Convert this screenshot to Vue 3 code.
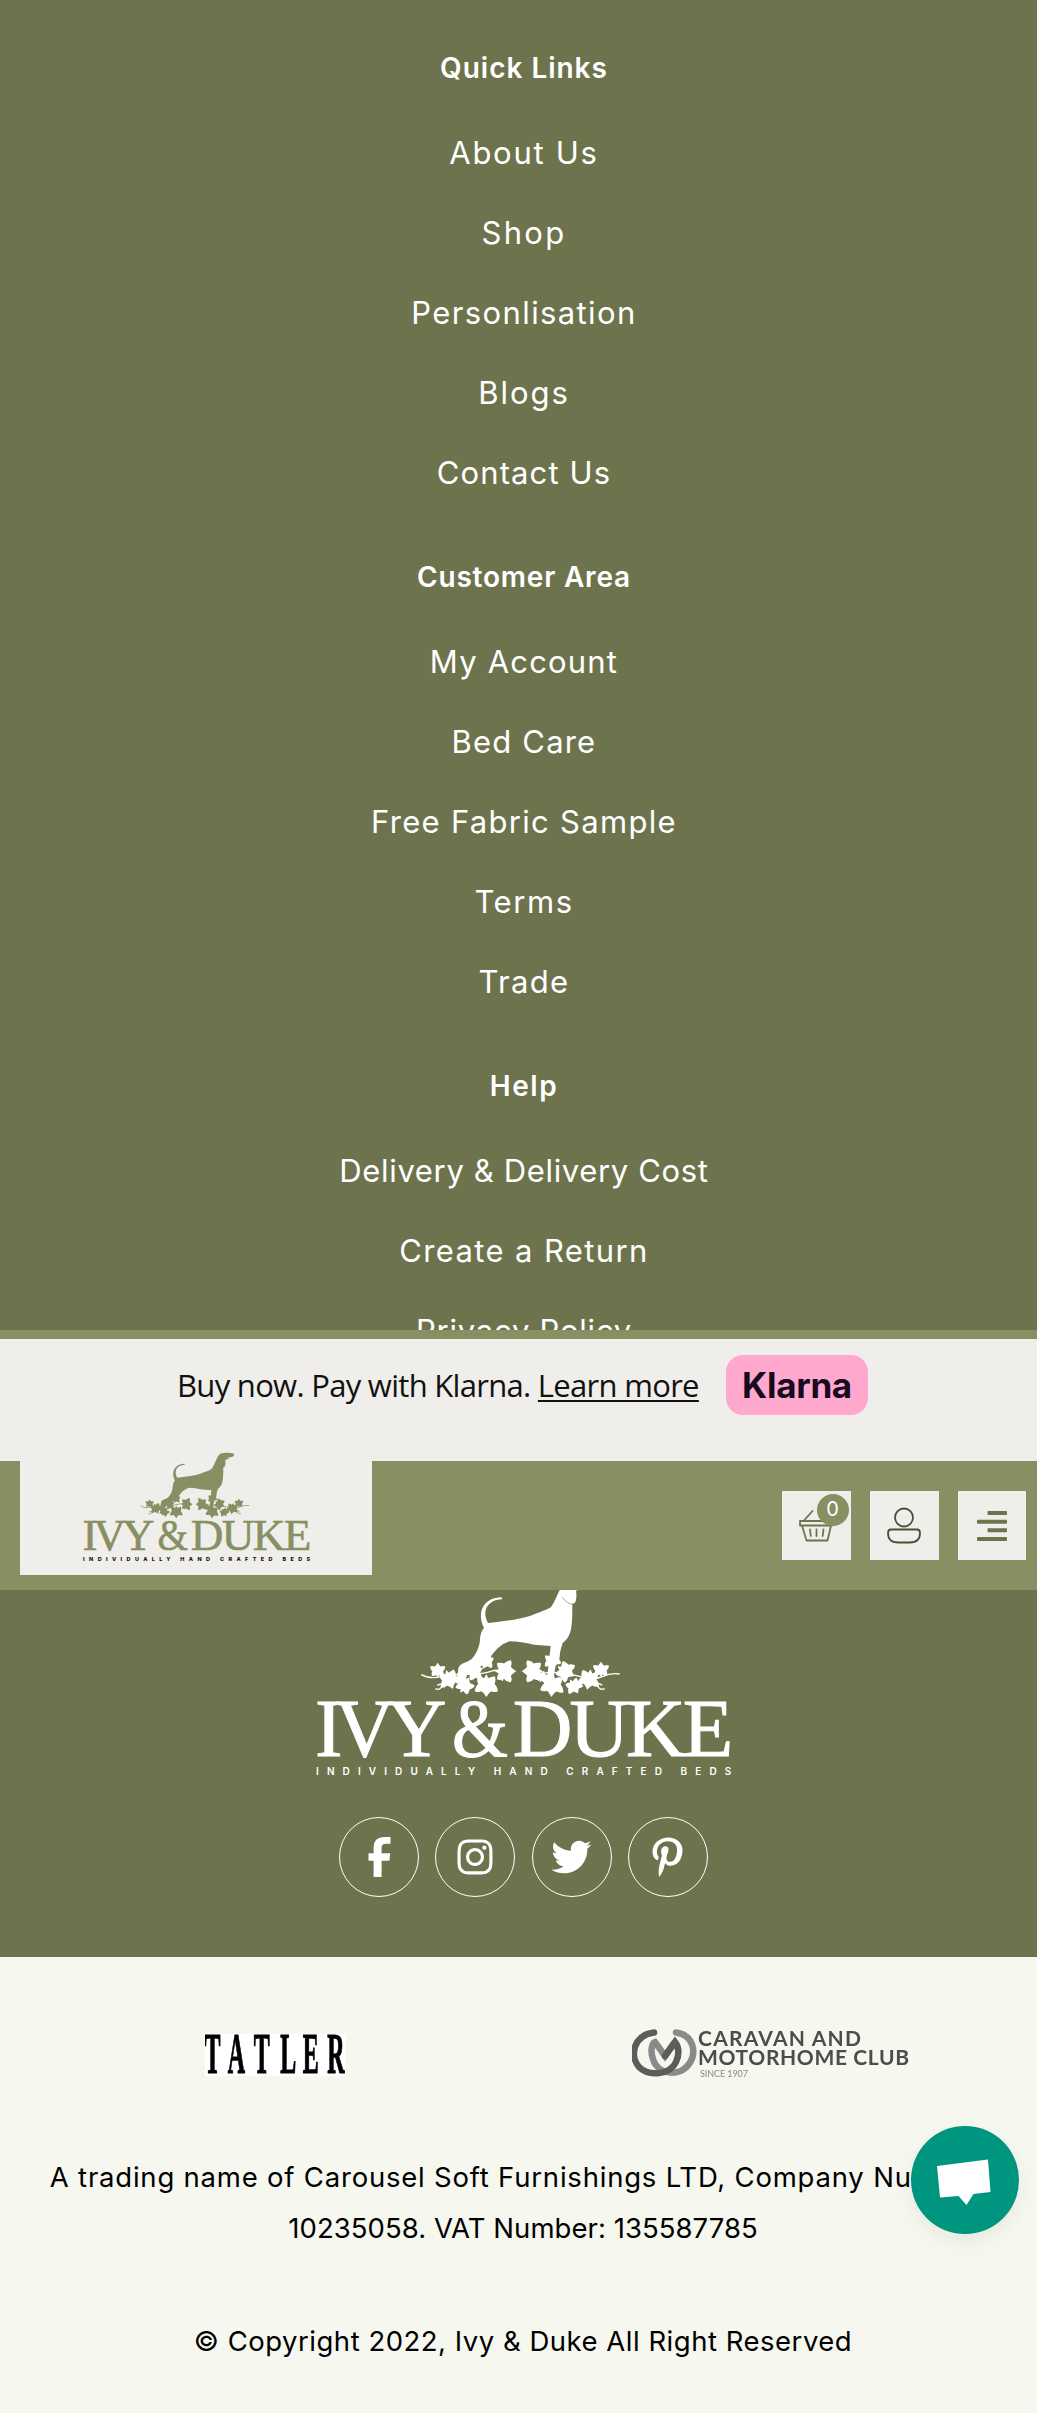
<script setup>
// [label, letter-spacing in px]
const sections = [
  {
    title: ['Quick Links', 0.98],
    links: [['About Us', 1.72], ['Shop', 2.35], ['Personlisation', 1.39], ['Blogs', 1.95], ['Contact Us', 1.13]]
  },
  {
    title: ['Customer Area', 0.79],
    links: [['My Account', 1.18], ['Bed Care', 1.18], ['Free Fabric Sample', 1.3], ['Terms', 1.56], ['Trade', 1.3]]
  },
  {
    title: ['Help', 1.6],
    links: [['Delivery & Delivery Cost', 0.65], ['Create a Return', 1.38], ['Privacy Policy', 0.77]]
  }
]

const leaves = [
  [411, 273, 23, 0], [446, 300, 31, 160], [492, 318, 27, 30], [521, 276, 28, 70], [556, 246, 24, 200],
  [557, 318, 35, 180], [614, 276, 33, 90], [696, 276, 33, -90], [724, 292, 19, 20], [755, 244, 25, 170],
  [755, 318, 35, 185], [795, 276, 30, 120], [820, 321, 25, 150], [865, 300, 32, 190], [901, 271, 24, 0]
]

const socials = [
  { name: 'Facebook', box: '-1 0 40 40', d: 'M30.500 0v6.800h-4.600q-4.300 0-4.300 4v5.400h8.600l-.8 7.500h-7.800V40h-8V23.700H8.500v-7.500h5.100V10.500Q13.600.2 24 0z' },
  { name: 'Instagram', box: '-32 0 512 512', d: 'M224.100 141c-63.600 0-114.900 51.300-114.900 114.900s51.300 114.900 114.900 114.900S339 319.500 339 255.900 287.700 141 224.100 141zm0 189.600c-41.100 0-74.700-33.500-74.700-74.700s33.500-74.700 74.700-74.700 74.700 33.500 74.700 74.700-33.600 74.700-74.700 74.700zm146.400-194.300c0 14.900-12 26.800-26.800 26.800-14.900 0-26.800-12-26.800-26.800s12-26.800 26.800-26.800 26.800 12 26.800 26.800zm76.100 27.200c-1.700-35.900-9.900-67.700-36.200-93.900-26.200-26.200-58-34.400-93.900-36.200-37-2.100-147.900-2.100-184.900 0-35.800 1.700-67.600 9.900-93.900 36.100s-34.400 58-36.200 93.900c-2.100 37-2.100 147.900 0 184.900 1.700 35.900 9.900 67.700 36.200 93.900s58 34.400 93.900 36.200c37 2.100 147.900 2.100 184.900 0 35.900-1.700 67.700-9.900 93.900-36.200 26.200-26.200 34.400-58 36.200-93.900 2.100-37 2.100-147.800 0-184.800zM398.800 388c-7.800 19.600-22.900 34.700-42.600 42.600-29.500 11.700-99.500 9-132.100 9s-102.700 2.600-132.100-9c-19.600-7.800-34.700-22.900-42.600-42.600-11.700-29.500-9-99.500-9-132.100s-2.600-102.700 9-132.100c7.800-19.600 22.900-34.700 42.600-42.600 29.500-11.700 99.500-9 132.100-9s102.700-2.600 132.100 9c19.600 7.800 34.700 22.900 42.600 42.600 11.700 29.500 9 99.500 9 132.100s2.700 102.700-9 132.100z' },
  { name: 'Twitter', box: '8 0 512 512', d: 'M459.370 151.716c.325 4.548.325 9.097.325 13.645 0 138.720-105.583 298.558-298.558 298.558-59.452 0-114.680-17.219-161.137-47.106 8.447.974 16.568 1.299 25.340 1.299 49.055 0 94.213-16.568 130.274-44.832-46.132-.975-84.792-31.188-98.112-72.772 6.498.974 12.995 1.624 19.818 1.624 9.421 0 18.843-1.300 27.614-3.573-48.081-9.747-84.143-51.980-84.143-102.985v-1.299c13.969 7.797 30.214 12.670 47.431 13.319-28.264-18.843-46.781-51.005-46.781-87.391 0-19.492 5.197-37.360 14.294-52.954 51.655 63.675 129.300 105.258 216.365 109.807-1.624-7.797-2.599-15.918-2.599-24.040 0-57.828 46.782-104.934 104.934-104.934 30.213 0 57.502 12.670 76.670 33.137 23.715-4.548 46.456-13.320 66.599-25.340-7.798 24.366-24.366 44.833-46.132 57.827 21.117-2.273 41.584-8.122 60.426-16.243-14.292 20.791-32.161 39.308-52.628 54.253z' },
  { name: 'Pinterest', box: '-58 0 512 512', d: 'M204 6.500C101.400 6.500 0 74.900 0 185.600 0 256 39.600 296 63.600 296c9.900 0 15.600-27.600 15.600-35.400 0-9.300-23.700-29.100-23.700-67.800 0-80.400 61.200-137.400 140.400-137.400 68.100 0 118.500 38.700 118.500 109.800 0 53.100-21.300 152.700-90.300 152.700-24.900 0-46.200-18-46.200-43.800 0-37.800 26.400-74.400 26.400-113.400 0-66.200-93.900-54.200-93.900 25.800 0 16.800 2.100 35.400 9.600 50.700-13.800 59.400-42 147.900-42 209.100 0 18.900 2.700 37.500 4.500 56.400 3.400 3.800 1.700 3.400 6.900 1.500 50.400-69 48.600-82.500 71.400-172.800 12.300 23.400 44.100 36 69.300 36 106.200 0 153.900-103.500 153.900-196.800C384 71.300 298.200 6.500 204 6.500z' }
]
</script>

<template>
  <div class="page">
    <svg class="defs" width="0" height="0" aria-hidden="true">
      <symbol id="leaf" viewBox="-10 -10 20 20" overflow="visible">
        <path d="M0-10C2-7 3-5.500 4.500-5C6-6 8-6 10-5C9.500-2 8.500 0 7 1C8 3 8 5 7.500 7.500C5 7.500 3.500 7 2 6L0 9.500L-2 6C-3.500 7-5 7.500-7.500 7.500C-8 5-8 3-7 1C-8.500 0-9.500-2-10-5C-8-6-6-6-4.500-5C-3-5.500-2-7 0-10Z" />
      </symbol>
      <symbol id="emblem" viewBox="40 -10 1260 610">
        <path d="M873-2 Q878 10 866 16 L838 22 Q826 28 820 40 Q814 62 815 82 C815 110 815 130 811 150 C806 172 798 182 786 191 L779 215 L776 240 L764 262 L757 310 L737 310 L743 262 L750 200 L700 196 C675 191 650 186 626 186 C598 196 578 216 563 246 L530 268 L500 285 L492 312 L466 312 L474 264 C482 250 500 250 512 240 C526 226 538 200 538 178 C540 160 545 152 550 145 C530 110 540 58 598 54 Q608 55 603 60 C560 62 542 96 562 131 C600 126 650 122 690 109 C715 98 740 92 752 82 C764 66 770 44 780 26 C786 6 798-5 818-5 C836-8 856-3 873-2Z" />
        <path d="M812 22H850Q838 32 826 34Q830 58 822 72Q810 76 800 62Z" />
        <path class="collar" d="M785 54Q800 74 816 75" />
        <path class="vine" d="M362 286Q385 300 420 292T500 285T575 275T605 305M404 328Q418 334 422 322T410 318M957 284Q930 280 905 292T830 290T740 280T715 305M912 328Q896 334 892 320T905 318" />
        <use v-for="(l, i) in leaves" :key="i" href="#leaf" :x="-l[2]" :y="-l[2]" :width="l[2] * 2" :height="l[2] * 2" :transform="`translate(${l[0]} ${l[1]}) rotate(${l[3]})`" />
      </symbol>
    </svg>

    <footer class="footer">
      <section v-for="s in sections" :key="s.title[0]" class="group">
        <h4 :style="{ letterSpacing: s.title[1] + 'px' }">{{ s.title[0] }}</h4>
        <ul>
          <li v-for="l in s.links" :key="l[0]"><a :style="{ letterSpacing: l[1] + 'px' }">{{ l[0] }}</a></li>
        </ul>
      </section>
      <svg class="brand" viewBox="40 -10 1260 610">
        <use href="#emblem" x="40" y="-10" width="1260" height="610" />
        <g class="name">
          <text x="43" y="530" textLength="394">IVY</text>
          <text x="454" y="530" textLength="168" lengthAdjust="spacingAndGlyphs">&amp;</text>
          <text x="636" y="530" textLength="662">DUKE</text>
        </g>
        <text class="tagline" x="46" y="586" textLength="1246">INDIVIDUALLY HAND CRAFTED BEDS</text>
      </svg>
      <div class="socials">
        <a v-for="s in socials" :key="s.name" :aria-label="s.name"><svg :viewBox="s.box"><path :d="s.d" /></svg></a>
      </div>
    </footer>

    <section class="legal">
      <div class="partners">
        <svg class="tatler" width="141" height="42" viewBox="0 0 141 42">
          <rect width="141" height="42" fill="#fff" />
          <g transform="scale(.42 1)">
            <text y="39" x="-1 54 116 179 233 291">TATLER</text>
          </g>
        </svg>
        <svg class="caravan" width="280" height="52" viewBox="0 0 280 52">
          <g fill="none" stroke-width="6.500" stroke-linecap="round">
            <path stroke="#8a8a88" d="M44 4.500C62 7 65 25 57 36C47 50 25 46 21 31C18 23 20 15 23 14L33 28L42 15" />
            <path stroke="#5c5c5a" d="M22 4.500C2 7-3 27 7 39C17 49 38 47 44 34C48 25 46 18 43 14L33 28" />
          </g>
          <text class="club" x="66" y="18" textLength="163">CARAVAN AND</text>
          <text class="club" x="66" y="37" textLength="211">MOTORHOME CLUB</text>
          <text class="since" x="68" y="48.500" textLength="48">SINCE 1907</text>
        </svg>
      </div>
      <p class="company">A trading name of Carousel Soft Furnishings LTD, Company Number</p>
      <p class="vat">10235058. VAT Number: 135587785</p>
      <p class="copy">© Copyright 2022, Ivy &amp; Duke All Right Reserved</p>
    </section>

    <header class="header">
      <div class="promo">
        <span class="promo-text">Buy now. Pay with Klarna. <a>Learn more</a></span>
        <span class="klarna">Klarna</span>
      </div>
      <div class="bar">
        <div class="logo-box">
          <svg class="brand-small" viewBox="40 -10 1260 610">
            <use href="#emblem" x="40" y="-10" width="1260" height="610" />
            <g class="name">
              <text x="43" y="530" textLength="394">IVY</text>
              <text x="454" y="530" textLength="168" lengthAdjust="spacingAndGlyphs">&amp;</text>
              <text x="636" y="530" textLength="662">DUKE</text>
            </g>
            <text class="tagline" x="46" y="586" textLength="1246">INDIVIDUALLY HAND CRAFTED BEDS</text>
          </svg>
        </div>
        <nav class="actions">
          <a aria-label="Basket">
            <svg width="69" height="69" viewBox="0 0 69 69" fill="none" stroke="#6d744d" stroke-width="1.800" stroke-linecap="round" stroke-linejoin="round">
              <path d="M18 30h32v4.500H18zM20 34.500L24.500 49.500h21L49 34.500M22 29.500L30.500 20M28 38.500l.8 6.500M34.500 38.500v6.500M41.500 38.500l-.8 6.500" />
            </svg>
            <span class="badge">0</span>
          </a>
          <a aria-label="Account">
            <svg width="69" height="69" viewBox="0 0 69 69" fill="none" stroke="#4b5034" stroke-width="1.800">
              <circle cx="34" cy="26.500" r="9" />
              <path d="M21 38.500H47Q50 38.500 50 42Q50 51.500 40 51.500H28Q18 51.500 18 42Q18 38.500 21 38.500Z" />
            </svg>
          </a>
          <a aria-label="Menu" class="menu">
            <svg width="68" height="69" viewBox="0 0 68 69" fill="#6d744d">
              <rect x="29.500" y="20" width="19.500" height="4" rx=".8" />
              <rect x="19" y="28.800" width="30" height="4" rx=".8" />
              <rect x="29.500" y="37.300" width="19.500" height="4" rx=".8" />
              <rect x="19" y="46" width="30" height="4" rx=".8" />
            </svg>
          </a>
        </nav>
      </div>
    </header>

    <button class="chat" aria-label="Chat">
      <svg viewBox="0 0 108 108"><path d="M26 40L77 33.500L79.500 66L62.500 68L55.500 79L47.500 70L29 71.500Z" fill="#fff" /></svg>
    </button>
  </div>
</template>

<style>
body { margin: 0; }
</style>

<style scoped>
.page { position: relative; width: 1037px; height: 2413px; overflow: hidden; background: #f6f7ee; font-family: Inter, "Liberation Sans", sans-serif; font-weight: 400; }
.defs { position: absolute; }
.footer { box-sizing: border-box; height: 1957px; padding: 48px 0 0 11px; background: #6d744d; color: #fff; display: flex; flex-direction: column; align-items: center; }
.group { margin-bottom: 44px; text-align: center; white-space: nowrap; }
.group:last-of-type { margin-bottom: 205px; }
h4 { margin: 0 0 25px; font-size: 28px; line-height: 40px; font-weight: 600; }
ul { list-style: none; margin: 0; padding: 0; }
li { height: 80px; line-height: 80px; font-size: 31px; }
.brand { width: 420px; height: 203.300px; flex: none; fill: #fff; color: #fff; margin-right: 1px; }
.name { font: 248px "Liberation Serif", serif; stroke: currentColor; stroke-width: 3; }
.tagline { font: 600 30px Inter, sans-serif; }
.collar { fill: none; stroke: #6d744d; stroke-width: 3; opacity: .6; }
.vine { fill: none; stroke: currentColor; stroke-width: 4; }
.socials { display: flex; gap: 16.200px; margin-top: 38px; margin-right: 1px; }
.socials a { box-sizing: border-box; width: 80px; height: 80px; border: 1px solid #fff; border-radius: 50%; display: flex; align-items: center; justify-content: center; }
.socials svg { width: 40px; height: 40px; fill: #fff; }

.legal { height: 456px; display: flex; flex-direction: column; align-items: center; padding-left: 9px; color: #000; font-size: 27.500px; }
.partners { display: flex; gap: 286px; height: 194.500px; padding-top: 70px; box-sizing: border-box; margin-right: -70px; }
.tatler { margin-top: 7px; filter: blur(.6px); font: bold 57px "Liberation Serif", serif; stroke: #000; stroke-width: 0; }
.tatler text { stroke-width: 1.200px; }
.caravan { margin-top: 1px; filter: blur(.5px); }
.club { font: 700 21px Lato, sans-serif; fill: #4c4c4a; }
.since { font: 400 9px Lato, sans-serif; fill: #8a8a86; }
p { margin: 0; line-height: 51px; white-space: nowrap; }
.company { letter-spacing: .790px; margin-right: 14px; }
.vat { letter-spacing: .050px; }
.copy { letter-spacing: .510px; margin-top: 62px; }

.header { position: absolute; left: 0; top: 1330px; width: 1037px; height: 260px; box-sizing: border-box; padding-top: 9px; background: #888f62; }
.promo { height: 122px; box-sizing: border-box; padding: 16px 0 0 177px; background: #efeeea; display: flex; align-items: flex-start; color: #111; font: 400 31px "Open Sans", "Noto Sans", sans-serif; }
.promo-text { width: 549px; line-height: 60px; letter-spacing: -.700px; white-space: nowrap; }
.promo-text a { text-decoration: underline; text-decoration-thickness: 2px; text-underline-offset: 3px; }
.klarna { width: 142px; height: 60px; border-radius: 17px; background: #ffa8cd; color: #170a22; font: 700 35px/61px Inter, sans-serif; text-align: center; letter-spacing: -.300px; }
.bar { display: flex; justify-content: space-between; align-items: flex-start; padding: 0 11px 0 20px; }
.logo-box { width: 352px; height: 123px; margin-top: -9px; background: #efeeea; }
.brand-small { display: block; width: 229.700px; height: 111.200px; margin-left: 61.500px; fill: #888f62; color: #888f62; }
.brand-small .tagline { fill: #111; font-weight: 800; }
.actions { display: flex; gap: 19px; margin-top: 30px; }
.actions a { position: relative; width: 69px; height: 69px; background: #efeeea; }
.actions .menu { width: 68px; }
.actions svg { display: block; }
.badge { position: absolute; right: 2.500px; top: 2.500px; width: 32px; height: 32px; border-radius: 50%; background: #888f62; color: #fff; font-size: 20px; line-height: 30px; text-align: center; }
.chat { position: absolute; left: 910.500px; top: 2126px; width: 108px; height: 108px; padding: 0; border: 0; border-radius: 50%; background: #00957f; box-shadow: 0 8px 20px rgba(0, 0, 0, .06); }
.chat svg { display: block; }
</style>
